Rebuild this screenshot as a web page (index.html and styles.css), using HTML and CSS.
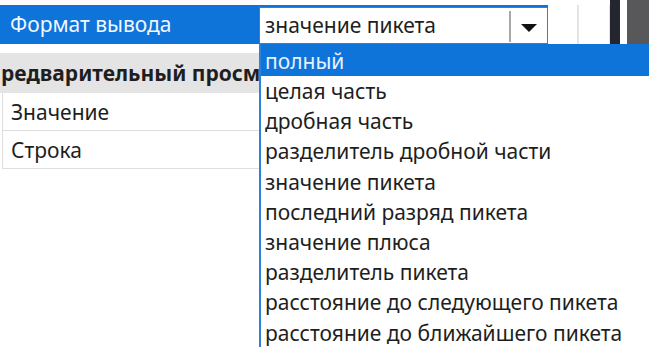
FILE: index.html
```html
<!DOCTYPE html>
<html>

<head>
    <meta charset="UTF-8">
    <meta name="viewport" content="width=device-width, initial-scale=1.0">
    <title>Формат вывода</title>

    <link rel="stylesheet" href="styles.css">
</head>

<body>
    <div class="window">
        <!-- property grid -->
        <div class="grid-panel">
            <div class="top-strip"></div>

            <div class="prop-row selected">
                <div class="prop-name">Формат вывода</div>
                <div class="prop-value">
                    <div class="combo">
                        <span class="combo-text">значение пикета</span>
                        <span class="combo-btn"><span class="arrow"></span></span>
                    </div>
                    <div class="value-rest"></div>
                </div>
            </div>

            <div class="section-head">
                <div class="section-clip">
                    <span class="section-title">Предварительный просмотр</span>
                </div>
            </div>

            <div class="preview-row">Значение</div>
            <div class="preview-row">Строка</div>
        </div>

        <div class="splitter"></div>
        <div class="splitter-gap"></div>
        <div class="side-panel"></div>

        <!-- open dropdown list of the combo -->
        <ul class="dropdown">
            <li class="active">полный</li>
            <li>целая часть</li>
            <li>дробная часть</li>
            <li>разделитель дробной части</li>
            <li>значение пикета</li>
            <li>последний разряд пикета</li>
            <li>значение плюса</li>
            <li>разделитель пикета</li>
            <li>расстояние до следующего пикета</li>
            <li>расстояние до ближайшего пикета</li>
        </ul>
    </div>
</body>

</html>
```

FILE: styles.css
```css
body {
    margin: 0;
    font-family: "Noto Sans", "Open Sans", sans-serif;
    font-size: 21px;
    color: #1e1e1e;
    background-color: #ffffff;
    overflow: hidden;
}

.window {
    position: relative;
    display: flex;
    width: 649px;
    height: 347px;
    overflow: hidden;
}

.grid-panel {
    width: 610px;
    flex-shrink: 0;
}

.top-strip {
    height: 5px;
}

.prop-row {
    display: flex;
    height: 39px;
}

.prop-name {
    width: 249px;
    padding-left: 10px;
    background-color: #0f74d9;
    color: #f2f7ff;
    line-height: 39px;
}

.prop-value {
    flex: 1;
    display: flex;
    background-color: #0f74d9;
}

.combo {
    display: flex;
    width: 287px;
    margin-top: 2px;
    background: white;
    border: 1px solid #2a82dc;
}

.combo-text {
    flex: 1;
    padding-left: 5px;
    line-height: 35px;
    white-space: nowrap;
}

.combo-btn {
    width: 36px;
    margin: 3px 0 1px;
    border-left: 2px solid #a8a8a8;
    display: flex;
    align-items: center;
    justify-content: center;
}

.arrow {
    width: 0;
    height: 0;
    margin-top: 2px;
    border-left: 8px solid transparent;
    border-right: 8px solid transparent;
    border-top: 8px solid #111;
}

.value-rest {
    flex: 1;
    background: white;
    background-image: linear-gradient(#e4e4e4, #e4e4e4);
    background-size: 2px 100%;
    background-position: 29px 0;
    background-repeat: no-repeat;
    border-right: 1px solid #e4e4e4;
}

.section-head {
    margin-top: 9px;
    height: 40px;
    background-color: #e4e4e4;
}

/* header is scrolled a little to the left, the dropdown hides the rest */
.section-clip {
    width: 259px;
    overflow: hidden;
    white-space: nowrap;
}

.section-title {
    display: inline-block;
    width: 274px;
    overflow: hidden;
    vertical-align: top;
    margin-left: -15px;
    line-height: 40px;
    font-weight: bold;
}

.preview-row {
    box-sizing: border-box;
    height: 38px;
    margin-left: 2px;
    padding: 1px 0 0 8px;
    line-height: 36px;
    border-left: 1px solid #dedede;
    border-bottom: 1px solid #dedede;
}

.splitter {
    width: 10px;
    height: 44px;
    background-color: #23262e;
    flex-shrink: 0;
}

.splitter-gap {
    width: 7px;
    height: 44px;
    flex-shrink: 0;
}

.side-panel {
    flex: 1;
    height: 44px;
    background-color: #58575a;
}

.dropdown {
    position: absolute;
    left: 259px;
    top: 44px;
    width: 420px;
    height: 320px;
    margin: 0;
    padding: 0;
    list-style: none;
    background: white;
    border-left: 2px solid #2a82dc;
}

.dropdown li {
    box-sizing: border-box;
    height: 30.2px;
    padding: 1px 0 0 4px;
    line-height: 29px;
    white-space: nowrap;
}

.dropdown li.active {
    height: 32px;
    padding-top: 3px;
    background-color: #0f74d9;
    color: #e8f1ff;
}
```
